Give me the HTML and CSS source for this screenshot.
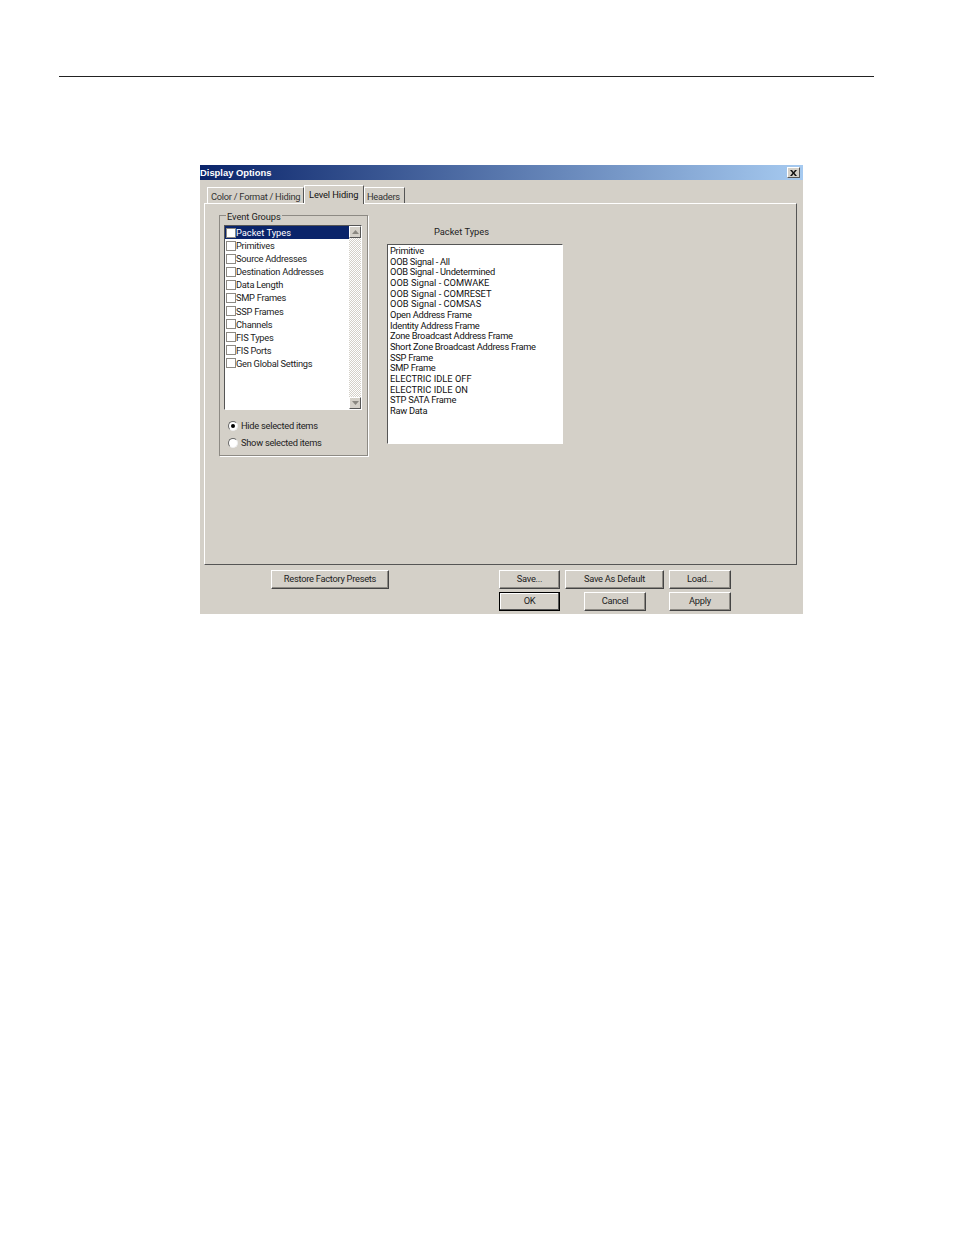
FILE: index.html
```html
<!DOCTYPE html>
<html lang="en">
<head>
<meta charset="utf-8">
<title>Display Options</title>
<link rel="stylesheet" href="styles.css">
</head>
<body>
<hr class="page-rule">
<main class="dialog">
  <header class="titlebar">
    <span class="title">Display Options</span>
    <span class="close"><svg width="7" height="6" viewBox="0 0 7 6"><path d="M0 0h2l1.500 2L5 0h2L4.500 3 7 6H5L3.500 4 2 6H0l2.500-3z" fill="#111"/></svg></span>
  </header>
  <div class="tabs">
    <span class="tab tab-first">Color / Format / Hiding</span>
    <span class="tab tab-active">Level Hiding</span>
    <span class="tab tab-last">Headers</span>
  </div>
  <section class="panel">
    <fieldset class="group">
      <legend>Event Groups</legend>
      <div class="listbox">
        <ul class="checks">
          <li class="check selected"><i class="box"></i>Packet Types</li>
          <li class="check"><i class="box"></i>Primitives</li>
          <li class="check"><i class="box"></i>Source Addresses</li>
          <li class="check"><i class="box"></i>Destination Addresses</li>
          <li class="check"><i class="box"></i>Data Length</li>
          <li class="check"><i class="box"></i>SMP Frames</li>
          <li class="check"><i class="box"></i>SSP Frames</li>
          <li class="check"><i class="box"></i>Channels</li>
          <li class="check"><i class="box"></i>FIS Types</li>
          <li class="check"><i class="box"></i>FIS Ports</li>
          <li class="check"><i class="box"></i>Gen Global Settings</li>
        </ul>
        <div class="scrollbar">
          <span class="arrow"><svg width="7" height="4" viewBox="0 0 7 4"><path d="M3.500 0L7 4H0z" fill="#8a8780"/></svg></span>
          <span class="arrow"><svg width="7" height="4" viewBox="0 0 7 4"><path d="M0 0h7L3.500 4z" fill="#8a8780"/></svg></span>
        </div>
      </div>
      <div class="radios">
        <div class="radio-row"><i class="radio on"></i>Hide selected items</div>
        <div class="radio-row"><i class="radio"></i>Show selected items</div>
      </div>
    </fieldset>
    <div class="types">
      <div class="types-label">Packet Types</div>
      <ul class="types-list">
        <li>Primitive</li>
        <li>OOB Signal - All</li>
        <li>OOB Signal - Undetermined</li>
        <li class="caps">OOB Signal - COMWAKE</li>
        <li class="caps">OOB Signal - COMRESET</li>
        <li class="caps">OOB Signal - COMSAS</li>
        <li>Open Address Frame</li>
        <li>Identity Address Frame</li>
        <li>Zone Broadcast Address Frame</li>
        <li>Short Zone Broadcast Address Frame</li>
        <li>SSP Frame</li>
        <li>SMP Frame</li>
        <li class="caps">ELECTRIC IDLE OFF</li>
        <li class="caps">ELECTRIC IDLE ON</li>
        <li>STP SATA Frame</li>
        <li>Raw Data</li>
      </ul>
    </div>
  </section>
  <footer class="actions">
    <button class="btn restore">Restore Factory Presets</button>
    <div class="action-grid">
      <button class="btn save">Save...</button>
      <button class="btn save-default">Save As Default</button>
      <button class="btn load">Load...</button>
      <button class="btn ok">OK</button>
      <button class="btn cancel">Cancel</button>
      <button class="btn apply">Apply</button>
    </div>
  </footer>
</main>
</body>
</html>
```
FILE: styles.css
```css
* { box-sizing: border-box; }
html, body { margin: 0; padding: 0; background: #fff; }
body { height: 1235px; overflow: hidden; font-family: Roboto, "Liberation Sans", Arial, sans-serif; font-size: 9.3px; letter-spacing: -0.27px; color: #111; }
ul { list-style: none; margin: 0; padding: 0; }
.page-rule { width: 815px; height: 1px; margin: 76px 0 0 59px; border: 0; background: #222; }
.dialog { width: 603px; height: 449px; margin: 88px 0 0 200px; background: #d4d0c8; display: flex; flex-direction: column; }
.titlebar { height: 15px; flex: none; display: flex; align-items: center; justify-content: space-between; padding: 0 3px 0 0; background: linear-gradient(90deg, #0a246a, #a6caf0); }
.title { color: #fff; font-family: "Liberation Sans", Arial, sans-serif; font-weight: bold; font-size: 9.4px; letter-spacing: 0; }
.close { width: 13px; height: 11px; display: flex; align-items: center; justify-content: center; background: #d4d0c8; border: 1px solid; border-color: #fff #555 #555 #fff; }
.tabs { height: 23px; flex: none; display: flex; align-items: flex-end; padding-left: 7px; }
.tab { height: 16px; line-height: 17px; padding: 0 4px; border: 1px solid; border-bottom: 0; border-color: #fff #555 #d4d0c8 #fff; white-space: nowrap; color: #333; }
.tab-first { width: 97px; padding-left: 3px; }
.tab-active { width: 60px; height: 19px; line-height: 17px; padding-left: 4px; letter-spacing: -0.1px; position: relative; z-index: 1; background: #d4d0c8; margin-bottom: -1px; color: #111; }
.tab-last { width: 41px; padding-left: 2px; }
.panel { width: 593px; height: 362px; flex: none; margin-left: 4px; border: 1px solid; border-color: #fff #555 #555 #fff; display: flex; align-items: flex-start; padding: 11px 0 0 14px; }
.group { width: 149px; height: 241px; flex: none; margin: 0; padding: 0 0 0 4px; border: 1px solid #8d8a84; box-shadow: 1px 1px 0 #fff; position: relative; }
.group legend { padding: 0 1px; margin-left: 6px; line-height: 1; height: 10px; letter-spacing: -0.1px; position: absolute; left: 0; top: -4px; background: #d4d0c8; color: #222; }
.listbox { width: 138px; height: 185px; margin-top: 9px; display: flex; border: 1px solid; border-color: #555 #fff #fff #555; background: #fff; }
.checks { flex: 1; padding-top: 0; }
.check { height: 13.08px; line-height: 13px; display: flex; align-items: center; color: #222; white-space: nowrap; }
.check.selected { background: #0a246a; color: #fff; letter-spacing: 0; }
.box { width: 10px; height: 10px; flex: none; margin: 0 0 0 1px; border: 1px solid #8d8a84; background: #fff; }
.scrollbar { width: 12px; flex: none; display: flex; flex-direction: column; justify-content: space-between; background: repeating-conic-gradient(#fff 0 25%, #d4d0c8 0 50%) 0 0 / 2px 2px; }
.arrow { height: 12px; display: flex; align-items: center; justify-content: center; background: #d4d0c8; border: 1px solid; border-color: #fff #555 #555 #fff; }
.radios { margin: 10px 0 0 4px; display: flex; flex-direction: column; gap: 6px; }
.radio-row { height: 11px; display: flex; align-items: center; color: #222; }
.radio { width: 10px; height: 10px; flex: none; margin-right: 3px; border-radius: 50%; background: #fff; border: 1px solid; border-color: #666 #eee #eee #666; position: relative; }
.radio.on::after { content: ""; position: absolute; left: 2px; top: 2px; width: 4px; height: 4px; border-radius: 50%; background: #000; }
.types { margin-left: 19px; width: 176px; padding-top: 11px; }
.types-label { height: 18px; padding-left: 47px; letter-spacing: 0; color: #222; }
.types-list { height: 200px; padding: 1px 0 0 2px; background: #fff; border: 1px solid; border-color: #555 #fff #fff #555; line-height: 10.67px; color: #111; white-space: nowrap; }
.caps { letter-spacing: 0; }
.actions { flex: 1; display: flex; padding: 5px 0 0 71px; }
.btn { font: inherit; letter-spacing: inherit; color: #222; padding: 0 0 2px; height: 19px; background: #d4d0c8; border: 1px solid; border-color: #fff #444 #444 #fff; box-shadow: inset -1px -1px 0 #8d8a84; }
.restore { width: 118px; flex: none; }
.action-grid { margin-left: 110px; width: 232px; height: 41px; display: grid; grid-template-columns: 61px 5px 19px 62px 18px 5px 62px; grid-template-rows: 19px 19px; row-gap: 3px; }
.save { grid-column: 1; grid-row: 1; }
.save-default { grid-column: 3 / 6; grid-row: 1; }
.load { grid-column: 7; grid-row: 1; }
.ok { grid-column: 1; grid-row: 2; border: 1px solid #000; box-shadow: inset -1px -1px 0 #555, inset 1px 1px 0 #fff; }
.cancel { grid-column: 3 / 5; grid-row: 2; margin-left: 19px; width: 62px; }
.apply { grid-column: 7; grid-row: 2; }
```
